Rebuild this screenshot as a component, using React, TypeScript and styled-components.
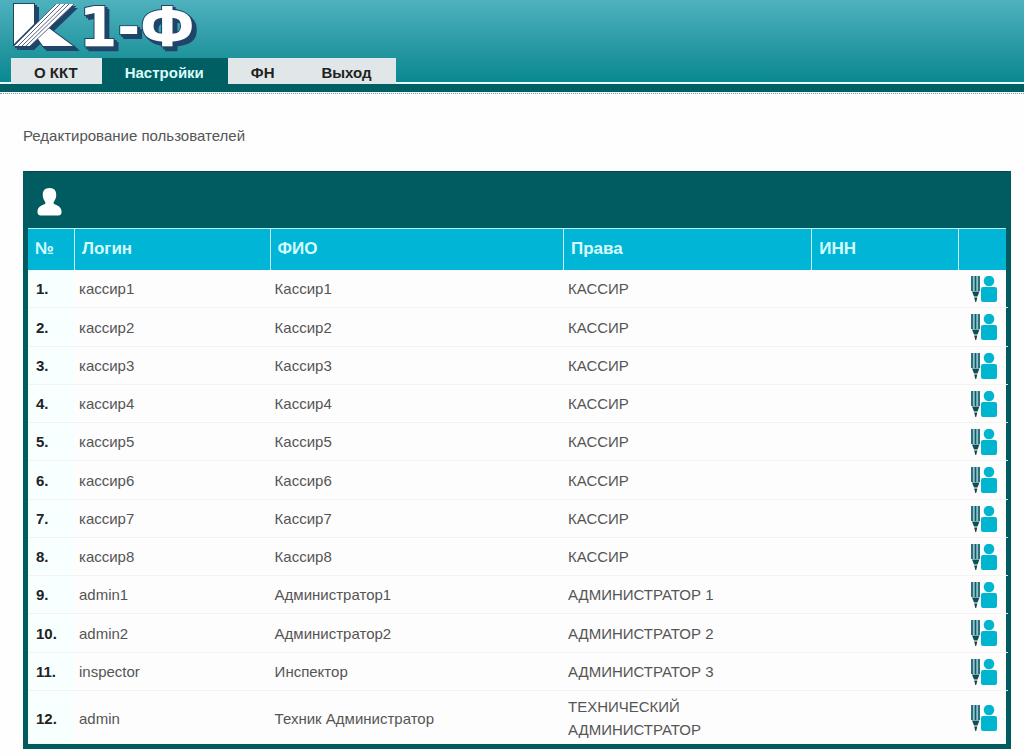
import React from "react";
import styled, { createGlobalStyle } from "styled-components";

const GlobalStyle = createGlobalStyle`
  * { box-sizing: border-box; }
  body {
    margin: 0;
    background: #fefefe;
    color: #555;
    font-family: "Liberation Sans", Arial, sans-serif;
    font-size: 15px;
  }
`;

const Header = styled.header`
  background: linear-gradient(#4eb2be, #2999a3 50%, #00848c);
  background-origin: border-box;
  border-bottom: 8px solid #005f63;
`;

const LogoLink = styled.a`
  display: block;
  height: 58px;
  padding-left: 8px;
  svg { display: block; overflow: visible; }
`;

const Nav = styled.nav`
  display: flex;
  &::before, &::after {
    content: "";
    width: 11px;
    border-bottom: 2px solid #e9ffff;
  }
  &::after { flex: 1; }
`;

const Tab = styled.a<{ $active?: boolean }>`
  height: 26px;
  padding: 0 24px 0 23px;
  line-height: 30px;
  font-weight: bold;
  text-decoration: none;
  color: ${(p) => (p.$active ? "#d9fbfb" : "#222")};
  background: ${(p) => (p.$active ? "#005f63" : "#e1e7e8")};
`;

const Main = styled.main`
  margin-top: 1px;
  border-top: 1px dotted #5fa3a8;
  padding: 32px 13px 7px 23px;
`;

const Title = styled.h1`
  margin: 0 0 25px;
  font-size: 15px;
  line-height: 20px;
  font-weight: normal;
`;

const Panel = styled.section`
  border: 5px solid #005c60;
  border-top: 1px solid #06434a;
  background: #005c60;
`;

const Toolbar = styled.div`
  height: 56px;
  padding: 14px 8px 0;
`;

const IconButton = styled.button`
  display: block;
  margin-left: auto;
  padding: 0;
  border: 0;
  background: none;
  cursor: pointer;
  svg { display: block; }
`;

const AddButton = styled(IconButton)`
  margin-left: 0;
`;

const Table = styled.table`
  width: 100%;
  table-layout: fixed;
  border-collapse: separate;
  border-spacing: 0;
  background: #fdfdfd;
`;

const Col = styled.col<{ $w: string }>`
  width: ${(p) => p.$w};
`;

const HeadCell = styled.th`
  height: 42px;
  padding: 0 7px 2px;
  border-top: 1px solid #b5f2f7;
  border-left: 1px solid #c9f6fa;
  background: #00b5d6;
  color: #d5fcff;
  font-size: 17px;
  text-align: left;
  &:first-child { border-left: 0; }
`;

const Cell = styled.td`
  position: relative;
  height: 38px;
  padding: 0 5px;
  border-bottom: 1px solid #f3f3f3;
  line-height: 23px;
  &:last-child { padding-right: 9px; }
  &:last-child::after {
    content: "";
    position: absolute;
    right: -2px;
    bottom: -1px;
    width: 2px;
    height: 1px;
    background: #d8f3f4;
  }
`;

const NumberCell = styled(Cell).attrs({ as: "th", scope: "row" })`
  padding-left: 8px;
  background: #f8ffff;
  color: #222;
  text-align: left;
`;

const Row = styled.tr`
  &:nth-child(4n + 2) > * { height: 39px; }
  &:last-child > * {
    padding-top: 4px;
    padding-bottom: 3px;
    border-bottom: 0;
  }
  &:last-child > *::after { display: none; }
`;

const LogoMark = styled.g`
  filter: drop-shadow(2px 2px 0 #1f456a) drop-shadow(2px 2px 0 #1f456a);
`;

function Logo() {
  return (
    <svg
      width="190"
      height="58"
      role="img"
      aria-label="К1-Ф"
      fontFamily="'DejaVu Sans', sans-serif"
      fontWeight="bold"
      fontSize="55"
    >
      <LogoMark fill="#fff" stroke="#1f456a" strokeWidth="2" paintOrder="stroke">
        <path d="M6 4H26V24L6 44Z" />
        <path d="M35 46 28 36 38 26 65 46Z" />
        <path d="M6 46 48 4H66L22 46Z" stroke="none" />
        <text x="71" y="46">1-Ф</text>
      </LogoMark>
      <path d="M6 46 48 4M10 46 52 4M14 46 57 4M18 46 61 4M22 46 66 4" stroke="#5a6480" strokeWidth="1" />
    </svg>
  );
}

function AddUserIcon() {
  return (
    <svg width="28" height="32" viewBox="0 0 28 32" fill="#fff">
      <path d="M13.500 2C8.500 2 6.500 5 6.800 9.500C7 13.500 9 15 9.500 17C9.500 19 2 19 1.500 25C1.300 28.500 3 29.500 5 29.500H22C24.500 29.500 26 28 25.500 25C25 19 17.500 19 17.500 17C18 15 20 13.500 20.200 9.500C20.500 5 18.500 2 13.500 2Z" />
    </svg>
  );
}

function EditUserIcon() {
  return (
    <svg width="26" height="26" viewBox="0 0 26 26">
      <path d="M0 0H9V15H0Z" fill="#8fc4cc" />
      <path d="M1 0V15M4.500 0V15M8 0V15" stroke="#165a66" strokeWidth="1.600" />
      <path d="M1 15.500H8.500L6.500 20.500H3Z" fill="#0b4f59" />
      <path d="M3.200 21.500H6.300L5.200 26H4.300Z" fill="#1c3d4a" />
      <circle cx="18" cy="5" r="5.300" fill="#00b5d0" />
      <rect x="10" y="11" width="16" height="15" rx="2" fill="#00b5d0" />
    </svg>
  );
}

const users = [
  ...[1, 2, 3, 4, 5, 6, 7, 8].map((n) => ["кассир" + n, "Кассир" + n, "КАССИР"]),
  ["admin1", "Администратор1", "АДМИНИСТРАТОР 1"],
  ["admin2", "Администратор2", "АДМИНИСТРАТОР 2"],
  ["inspector", "Инспектор", "АДМИНИСТРАТОР 3"],
  ["admin", "Техник Администратор", "ТЕХНИЧЕСКИЙ АДМИНИСТРАТОР"],
];

export default function App() {
  return (
    <>
      <GlobalStyle />
      <Header>
        <LogoLink href="#"><Logo /></LogoLink>
        <Nav>
          <Tab href="#kkt">О ККТ</Tab>
          <Tab href="#settings" $active aria-current="page">Настройки</Tab>
          <Tab href="#fn">ФН</Tab>
          <Tab href="#exit">Выход</Tab>
        </Nav>
      </Header>
      <Main>
        <Title>Редактирование пользователей</Title>
        <Panel>
          <Toolbar>
            <AddButton aria-label="Добавить пользователя"><AddUserIcon /></AddButton>
          </Toolbar>
          <Table>
            <colgroup>
              <Col $w="46px" />
              <Col $w="20%" />
              <Col $w="30%" />
              <Col $w="auto" />
              <Col $w="15%" />
              <Col $w="48px" />
            </colgroup>
            <thead>
              <tr>
                <HeadCell scope="col">№</HeadCell>
                <HeadCell scope="col">Логин</HeadCell>
                <HeadCell scope="col">ФИО</HeadCell>
                <HeadCell scope="col">Права</HeadCell>
                <HeadCell scope="col">ИНН</HeadCell>
                <HeadCell scope="col" aria-label="Действия" />
              </tr>
            </thead>
            <tbody>
              {users.map(([login, name, role], i) => (
                <Row key={login}>
                  <NumberCell>{i + 1}.</NumberCell>
                  <Cell>{login}</Cell>
                  <Cell>{name}</Cell>
                  <Cell>{role}</Cell>
                  <Cell />
                  <Cell>
                    <IconButton aria-label={`Изменить ${login}`}><EditUserIcon /></IconButton>
                  </Cell>
                </Row>
              ))}
            </tbody>
          </Table>
        </Panel>
      </Main>
    </>
  );
}
